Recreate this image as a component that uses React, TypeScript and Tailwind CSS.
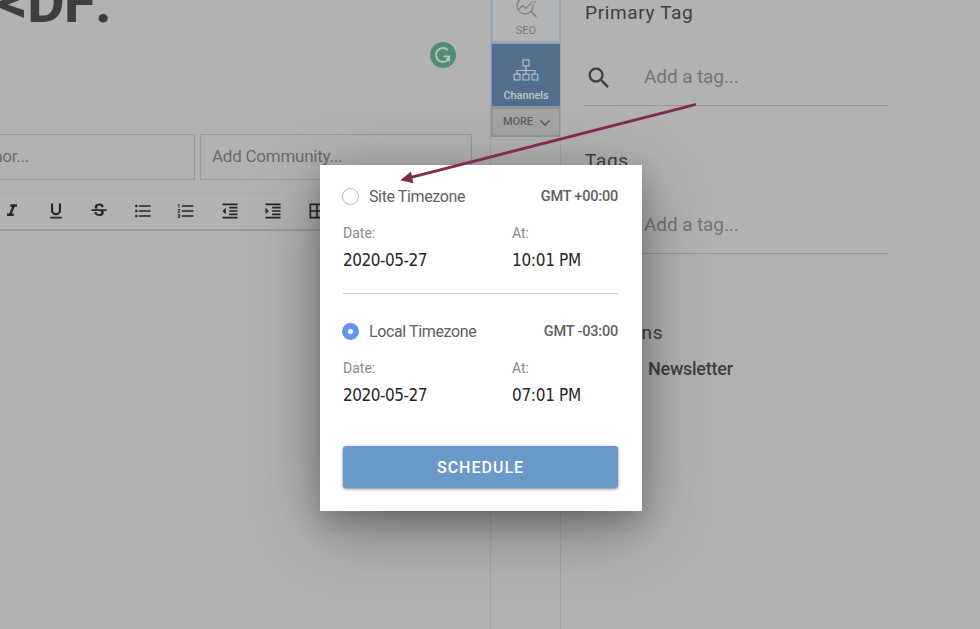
import {
  MdBorderAll,
  MdFormatIndentDecrease,
  MdFormatIndentIncrease,
  MdFormatItalic,
  MdFormatListBulleted,
  MdFormatListNumbered,
  MdFormatUnderlined,
  MdSearch,
  MdStrikethroughS,
} from "react-icons/md";
import { clsx } from "clsx";

const TOOLS = [
  MdFormatItalic,
  MdFormatUnderlined,
  MdStrikethroughS,
  MdFormatListBulleted,
  MdFormatListNumbered,
  MdFormatIndentDecrease,
  MdFormatIndentIncrease,
  MdBorderAll,
];

function GrammarBadge() {
  return (
    <svg viewBox="0 0 26 26" className="size-[26px]" aria-hidden>
      <circle cx="13" cy="13" r="13" fill="#528c73" />
      <path
        d="M17.8 7.9A7 7 0 1 0 18.6 17.2M19.2 19.6V14.4H13.8M19 14.6 16.6 18"
        fill="none"
        stroke="#b9c6c0"
        strokeWidth="1.8"
      />
    </svg>
  );
}

function SeoIcon() {
  return (
    <svg viewBox="0 0 24 24" className="size-6" fill="none" stroke="#7b7b7d" strokeWidth="1.1" aria-hidden>
      <path d="M18.9 10.2A8 8 0 1 1 16 5.6" />
      <path d="M16.8 17.2 22.4 22.8" strokeWidth="1.5" />
      <path d="M4.5 15.5 8.5 11.5 12 14.5 18.5 7.5M21 7V8.8" />
    </svg>
  );
}

function ChannelsIcon() {
  return (
    <svg viewBox="0 0 26 22" className="h-[22px] w-[26px]" fill="none" stroke="#b5bdc6" strokeWidth="1.2" aria-hidden>
      <rect x="10" y="0.9" width="6" height="6" />
      <rect x="1.2" y="15.2" width="5.8" height="5.8" />
      <rect x="10" y="15.2" width="6" height="5.8" />
      <rect x="19" y="15.2" width="5.8" height="5.8" />
      <path d="M13 7V15M4 15V11.5H22V15" />
    </svg>
  );
}

function Editor() {
  return (
    <main className="flex h-full w-[490px] shrink-0 flex-col">
      <header className="flex h-[134px] shrink-0 justify-between pr-[34px]">
        <h1 className="-mt-[33px] -ml-[1px] text-[58px] leading-[71px] font-bold tracking-[-0.7px] whitespace-nowrap text-[#3f3d3e] [font-kerning:none]">
          <span className="-ml-px">&lt;</span>DF.
        </h1>
        <div className="pt-[42px]">
          <GrammarBadge />
        </div>
      </header>

      <div className="flex h-[46px] shrink-0 gap-[5px] text-[17px] tracking-[-0.25px] text-[#6b6b6b]">
        <div className="flex w-[195px] items-center justify-end overflow-hidden border border-l-0 border-[#999] pr-[165px] whitespace-nowrap">
          Add Author...
        </div>
        <div className="flex w-[272px] items-center border border-[#999] pl-[11px]">Add Community...</div>
      </div>

      <div className="mt-3 flex h-[39px] shrink-0 border-t border-b-2 border-t-[#adadad] border-b-[#999]">
        {TOOLS.map((Icon, i) => (
          <div key={i} className="-ml-[10px] flex w-[53.5px] shrink-0 items-center pl-3">
            <Icon className="size-5 text-[#262626]" />
          </div>
        ))}
      </div>
    </main>
  );
}

function Tabs() {
  return (
    <nav className="flex h-full w-[70px] shrink-0 flex-col border-l border-[#a5a5a8] text-[11px]">
      <div className="-mr-px flex h-[43px] shrink-0 flex-col items-center border-2 border-t-0 border-[#98a7b7] bg-[#b3b4b6] text-[#77777a]">
        <div className="-mt-[6px]">
          <SeoIcon />
        </div>
        <span className="mt-[6px] leading-[14px]">SEO</span>
      </div>
      <div className="-mr-px flex h-[64px] shrink-0 flex-col items-center border border-[#7f98b3] bg-[#536f8e] pt-[15px] font-medium tracking-[-0.1px] text-[#c0c6cc]">
        <ChannelsIcon />
        <span className="mt-[8px] leading-[14px]">Channels</span>
      </div>
      <div className="-mr-px flex h-[30px] shrink-0 items-center justify-center gap-[7px] border-2 border-[#959595] bg-[#a4a4a4] pt-px pl-px font-medium tracking-[-0.1px] text-[#606060]">
        MORE
        <svg viewBox="0 0 10 6" className="h-1.5 w-2.5" fill="none" stroke="#505050" strokeWidth="1.3" aria-hidden>
          <path d="M0.5 0.5 5 5.2 9.5 0.5" />
        </svg>
      </div>
    </nav>
  );
}

function TagField() {
  return (
    <div className="-ml-px flex h-[57px] items-center border-b border-[#979797] pt-px text-[19px] text-[#747474]">
      <MdSearch className="ml-px size-7 text-[#3e3e3e]" />
      <span className="ml-[31px] tracking-[-0.1px]">Add a tag...</span>
    </div>
  );
}

function Sidebar() {
  return (
    <aside className="flex h-full w-[329px] flex-col border-l border-[#a5a5a8] pl-6 text-[#3f3f3f]">
      <h2 className="text-[19px] leading-[26px] tracking-[0.65px]">Primary Tag</h2>
      <div className="mt-[23px]">
        <TagField />
      </div>
      <h2 className="mt-[42px] text-[19px] leading-[26px] tracking-[0.65px]">Tags</h2>
      <div className="mt-[23px]">
        <TagField />
      </div>
      <h2 className="mt-[66px] text-[19px] leading-[26px] tracking-[0.6px]">Sections</h2>
      <label className="mt-[11px] pl-[63px] text-[18px] leading-6 font-medium tracking-[-0.25px]">Newsletter</label>
    </aside>
  );
}

interface ZoneProps {
  label: string;
  offset: string;
  date: string;
  time: string;
  selected?: boolean;
}

function Zone({ label, offset, date, time, selected }: ZoneProps) {
  return (
    <section className="h-[106px] text-[#616161]">
      <div className="-ml-px flex h-5 items-center">
        <span
          className={clsx(
            "mb-px size-[17px] shrink-0 rounded-full",
            selected ? "border-[6px] border-[#6196ed] bg-white" : "border border-[#b8b8b8]",
          )}
        />
        <span className="mb-px ml-[10px] text-[16px] tracking-[-0.38px]">{label}</span>
        <span className="ml-auto text-[14.5px] font-medium tracking-[-0.2px]">{offset}</span>
      </div>
      <div className="mt-4 grid grid-cols-[169px_1fr]">
        <span className="text-[14px] leading-5 text-[#8a8a8a]">Date:</span>
        <span className="text-[14px] leading-5 text-[#8a8a8a]">At:</span>
        <span className="mt-[7px] font-['DejaVu_Sans_Condensed','DejaVu_Sans',sans-serif] text-[17px] leading-5 tracking-[-0.5px] text-[#272727]">
          {date}
        </span>
        <span className="mt-[7px] font-['DejaVu_Sans_Condensed','DejaVu_Sans',sans-serif] text-[17px] leading-5 tracking-[-0.3px] text-[#272727]">
          {time}
        </span>
      </div>
    </section>
  );
}

function ScheduleDialog() {
  return (
    <div className="absolute top-[165px] left-[320px] flex h-[346px] w-[322px] flex-col bg-white pt-[22px] pr-6 pl-[23px] shadow-[0_17px_66px_rgba(0,0,0,0.34),0_11px_24px_rgba(0,0,0,0.18)]">
      <Zone label="Site Timezone" offset="GMT +00:00" date="2020-05-27" time="10:01 PM" />
      <hr className="mb-[28px] border-[#c9c9c9]" />
      <Zone label="Local Timezone" offset="GMT -03:00" date="2020-05-27" time="07:01 PM" selected />
      <button className="mt-[18px] h-[42px] shrink-0 rounded-[3px] bg-[#6998c9] pt-px text-[16px] font-medium tracking-[1px] text-white shadow-[0_1px_3px_rgba(0,0,0,0.5)]">
        SCHEDULE
      </button>
    </div>
  );
}

function Pointer() {
  return (
    <svg viewBox="0 0 980 200" className="pointer-events-none absolute top-0 left-0 h-[200px] w-[980px]" aria-hidden>
      <path d="M696 104.3 410 177.6" stroke="#832951" strokeWidth="2.8" />
      <path d="M400.3 180.3 411 171.6 413.4 183.2Z" fill="#832951" />
    </svg>
  );
}

export default function App() {
  return (
    <div className="relative flex h-[629px] w-[980px] overflow-hidden bg-[#b2b2b2] font-['Roboto',sans-serif]">
      <Editor />
      <Tabs />
      <Sidebar />
      <ScheduleDialog />
      <Pointer />
    </div>
  );
}
